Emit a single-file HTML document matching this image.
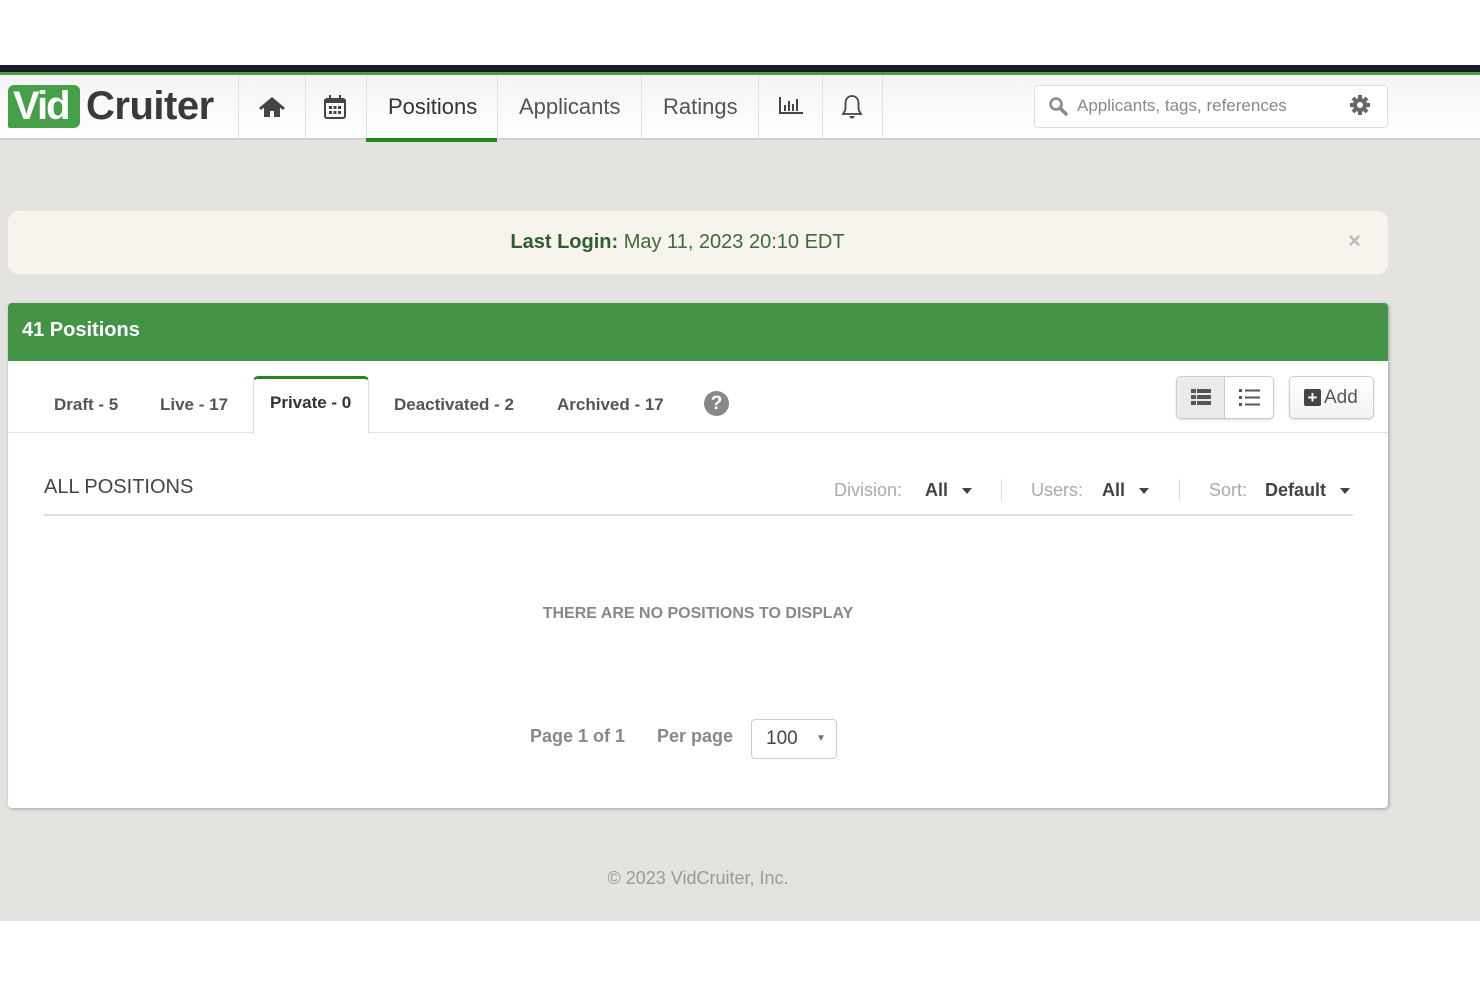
<!DOCTYPE html>
<html><head><meta charset="utf-8"><style>
*{margin:0;padding:0;box-sizing:border-box}
body{width:1480px;height:987px;background:#fff;font-family:"Liberation Sans",Arial,sans-serif;position:relative;overflow:hidden}
.a{position:absolute}
.gray{left:0;top:140px;width:1480px;height:781px;background:#e4e3e0}
.topbar{left:0;top:65px;width:1480px;height:7px;background:#1b1a2b}
.gline{left:0;top:72px;width:1480px;height:3px;background:#46a04a}
.nav{left:0;top:75px;width:1480px;height:65px;background:linear-gradient(#f4f4f4,#fff);border-bottom:2px solid #cfcfcf}
.sep{top:75px;width:1px;height:65px;background:#e2e2e2}
.nt{top:75px;height:65px;line-height:64px;font-size:22px;color:#555}
.t{font-size:17px;font-weight:bold;color:#555}
.car{display:inline-block;width:0;height:0;border-left:5px solid transparent;border-right:5px solid transparent;border-top:6px solid #444;vertical-align:middle;margin-left:14px}
</style></head><body>
<div class="a gray"></div>
<div class="a topbar"></div><div class="a gline"></div>
<div class="a nav"></div>
<div class="a" style="left:8px;top:85px;width:72px;height:43px;background:#46a04a;border-radius:6px 6px 6px 2px"></div>
<div class="a" style="left:13px;top:84px;font-size:40px;font-weight:bold;color:#fff;letter-spacing:-2px">Vid</div>
<div class="a" style="left:86px;top:84px;font-size:40px;font-weight:bold;color:#3a3a3a;letter-spacing:-0.5px">Cruiter</div>
<div class="a sep" style="left:238px"></div>
<div class="a sep" style="left:305px"></div>
<div class="a sep" style="left:366px"></div>
<div class="a sep" style="left:497px"></div>
<div class="a sep" style="left:641px"></div>
<div class="a sep" style="left:758px"></div>
<div class="a sep" style="left:822px"></div>
<div class="a sep" style="left:882px"></div>
<svg class="a" style="left:258px;top:95px" width="28" height="24" viewBox="0 0 28 24"><path d="M14 2L1 13l2 2 3-2.5V22h6v-6h4v6h6v-9.5l3 2.5 2-2z" fill="#444"/></svg>
<svg class="a" style="left:323px;top:94px" width="24" height="26" viewBox="0 0 24 26"><rect x="2" y="5" width="20" height="19" rx="2" fill="none" stroke="#444" stroke-width="2"/><rect x="2" y="5" width="20" height="4" fill="#444"/><rect x="6" y="1" width="2" height="6" fill="#444"/><rect x="16" y="1" width="2" height="6" fill="#444"/><g fill="#444"><rect x="6" y="12" width="3" height="3"/><rect x="10.5" y="12" width="3" height="3"/><rect x="15" y="12" width="3" height="3"/><rect x="6" y="17" width="3" height="3"/><rect x="10.5" y="17" width="3" height="3"/><rect x="15" y="17" width="3" height="3"/></g></svg>
<div class="a nt" style="left:388px;color:#333">Positions</div>
<div class="a" style="left:366px;top:138px;width:131px;height:4px;background:#1e8a1e"></div>
<div class="a nt" style="left:519px">Applicants</div>
<div class="a nt" style="left:663px">Ratings</div>
<svg class="a" style="left:778px;top:96px" width="26" height="20" viewBox="0 0 26 20"><path d="M2 1v16h23" fill="none" stroke="#444" stroke-width="2"/><g fill="#444"><rect x="6" y="9" width="2" height="6"/><rect x="10" y="5" width="2" height="10"/><rect x="14" y="8" width="2" height="7"/><rect x="18" y="3" width="2" height="12"/></g></svg>
<svg class="a" style="left:840px;top:93px" width="24" height="28" viewBox="0 0 24 28"><path d="M12 3c-4.5 0-6.5 3.5-6.5 7.5v6L3 21h18l-2.5-4.5v-6C18.5 6.5 16.5 3 12 3z" fill="none" stroke="#444" stroke-width="1.8"/><path d="M9.5 23a2.5 2.5 0 005 0z" fill="#444"/></svg>
<div class="a" style="left:1034px;top:85px;width:354px;height:43px;background:#fff;border:1px solid #ddd;border-radius:4px"></div>
<svg class="a" style="left:1048px;top:96px" width="20" height="20" viewBox="0 0 20 20"><circle cx="8" cy="8" r="5.5" fill="none" stroke="#888" stroke-width="2.5"/><path d="M12 12l6 6" stroke="#888" stroke-width="3.5" stroke-linecap="round"/></svg>
<div class="a" style="left:1077px;top:96px;font-size:17px;color:#888">Applicants, tags, references</div>
<svg class="a" style="left:1349px;top:94px" width="22" height="22" viewBox="0 0 22 22"><g fill="#666"><circle cx="11" cy="11" r="7"/><g stroke="#666" stroke-width="4"><path d="M11 1v20M1 11h20M4 4l14 14M18 4L4 18"/></g></g><circle cx="11" cy="11" r="3" fill="#fff"/></svg>

<div class="a" style="left:8px;top:211px;width:1380px;height:63px;background:#f7f3ed;border-radius:10px"></div>
<div class="a" style="left:0;top:231px;width:1355px;text-align:center;font-size:20px;color:#3b6b3b"><b style="color:#2e5e2e">Last Login:</b> May 11, 2023 20:10 EDT</div>
<div class="a" style="left:1348px;top:228px;font-size:22px;color:#bbb;font-weight:bold">×</div>

<div class="a" style="left:8px;top:303px;width:1380px;height:505px;background:#fff;border-radius:4px;box-shadow:1px 1px 3px rgba(0,0,0,.3)"></div>
<div class="a" style="left:8px;top:303px;width:1380px;height:58px;background:#439447;border-radius:4px 4px 0 0"></div>
<div class="a" style="left:22px;top:319px;font-size:20px;font-weight:bold;color:#fff">41 Positions</div>
<div class="a" style="left:8px;top:432px;width:1380px;height:1px;background:#e2e2e2"></div>
<div class="a" style="left:253px;top:376px;width:116px;height:58px;background:#fff;border:1px solid #ddd;border-bottom:none;border-top:3px solid #1e8a1e;border-radius:5px 5px 0 0"></div>
<div class="a t" style="left:54px;top:395px">Draft - 5</div>
<div class="a t" style="left:160px;top:395px">Live - 17</div>
<div class="a t" style="left:270px;top:393px;color:#333">Private - 0</div>
<div class="a t" style="left:394px;top:395px">Deactivated - 2</div>
<div class="a t" style="left:557px;top:395px">Archived - 17</div>
<div class="a" style="left:704px;top:391px;width:25px;height:25px;border-radius:50%;background:#888;color:#fff;font-weight:bold;font-size:19px;text-align:center;line-height:25px">?</div>
<div class="a" style="left:1176px;top:376px;width:98px;height:43px;border:1px solid #ccc;border-radius:5px;background:#fff;box-shadow:0 1px 2px rgba(0,0,0,.15)"></div>
<div class="a" style="left:1177px;top:377px;width:48px;height:41px;background:#eaeaea;border-right:1px solid #ccc;border-radius:4px 0 0 4px"></div>
<svg class="a" style="left:1191px;top:389px" width="20" height="17" viewBox="0 0 20 17"><g fill="#555"><rect x="0" y="0" width="5" height="4"/><rect x="6" y="0" width="14" height="4"/><rect x="0" y="6" width="5" height="4"/><rect x="6" y="6" width="14" height="4"/><rect x="0" y="12" width="5" height="4"/><rect x="6" y="12" width="14" height="4"/></g></svg>
<svg class="a" style="left:1239px;top:389px" width="21" height="17" viewBox="0 0 21 17"><g fill="#555"><rect x="0" y="0" width="3" height="3"/><rect x="6" y="0.5" width="15" height="2"/><rect x="0" y="7" width="3" height="3"/><rect x="6" y="7.5" width="15" height="2"/><rect x="0" y="14" width="3" height="3"/><rect x="6" y="14.5" width="15" height="2"/></g></svg>
<div class="a" style="left:1289px;top:376px;width:85px;height:43px;border:1px solid #ccc;border-radius:5px;background:linear-gradient(#fff,#f2f2f2);box-shadow:0 1px 2px rgba(0,0,0,.15)"></div>
<div class="a" style="left:1304px;top:389px;width:17px;height:17px;background:#444;border-radius:2px;color:#fff;font-weight:bold;font-size:17px;line-height:17px;text-align:center">+</div>
<div class="a" style="left:1324px;top:387px;font-size:19px;color:#555">Add</div>

<div class="a" style="left:44px;top:476px;font-size:20px;color:#444">ALL POSITIONS</div>
<div class="a" style="left:44px;top:514px;width:1309px;height:2px;background:#ddd"></div>
<div class="a" style="left:834px;top:480px;font-size:18px;color:#aaa">Division:</div>
<div class="a" style="left:925px;top:480px;font-size:18px;color:#444;font-weight:bold">All<span class="car"></span></div>
<div class="a" style="left:1001px;top:479px;width:1px;height:22px;background:#ddd"></div>
<div class="a" style="left:1031px;top:480px;font-size:18px;color:#aaa">Users:</div>
<div class="a" style="left:1102px;top:480px;font-size:18px;color:#444;font-weight:bold">All<span class="car"></span></div>
<div class="a" style="left:1179px;top:479px;width:1px;height:22px;background:#ddd"></div>
<div class="a" style="left:1209px;top:480px;font-size:18px;color:#aaa">Sort:</div>
<div class="a" style="left:1265px;top:480px;font-size:18px;color:#444;font-weight:bold">Default<span class="car"></span></div>

<div class="a" style="left:0;top:605px;width:1396px;text-align:center;font-size:16px;font-weight:bold;color:#888">THERE ARE NO POSITIONS TO DISPLAY</div>
<div class="a" style="left:530px;top:726px;font-size:18px;font-weight:bold;color:#888">Page 1 of 1</div>
<div class="a" style="left:657px;top:726px;font-size:18px;font-weight:bold;color:#888">Per page</div>
<div class="a" style="left:751px;top:719px;width:86px;height:40px;border:1px solid #ccc;border-radius:4px;background:#fff"></div>
<div class="a" style="left:766px;top:728px;font-size:19px;color:#444">100</div>
<div class="a" style="left:816px;top:733px;font-size:10px;color:#777">▼</div>

<div class="a" style="left:0;top:868px;width:1396px;text-align:center;font-size:18px;color:#999">© 2023 VidCruiter, Inc.</div>
</body></html>
